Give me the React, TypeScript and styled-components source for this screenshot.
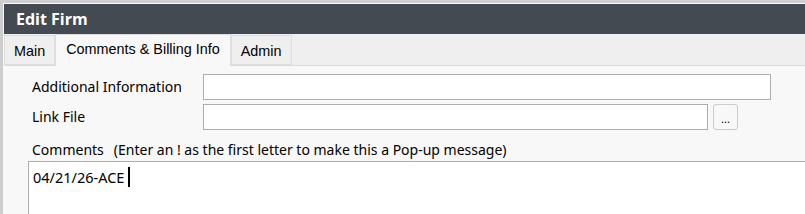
import React from "react";
import { styled, createGlobalStyle } from "styled-components";

const GlobalStyle = createGlobalStyle`
  html, body {
    margin: 0;
    padding: 0;
    background: #f8f8f8;
    overflow: hidden;
  }
  body {
    font-family: "Noto Sans", "Open Sans", sans-serif;
  }
`;

const App: React.FC = () => {
  const tabs = ["Main", "Comments & Billing Info", "Admin"];
  const activeTab = 1;

  return (
    <>
      <GlobalStyle />
      <Window>
        <TitleBar>Edit Firm</TitleBar>
        <TabStrip>
          {tabs.map((tab, i) => (
            <Tab key={tab} $active={i === activeTab}>
              {tab}
            </Tab>
          ))}
        </TabStrip>
        <Panel>
          <FieldRow>
            <Label>Additional Information</Label>
            <TextBox $width={568} />
          </FieldRow>
          <FieldRow>
            <Label>Link File</Label>
            <TextBox $width={505} />
            <BrowseButton>...</BrowseButton>
          </FieldRow>
          <CommentsLabel>
            Comments<Hint>(Enter an ! as the first letter to make this a Pop-up message)</Hint>
          </CommentsLabel>
          <CommentsBox>
            04/21/26-ACE<Caret />
          </CommentsBox>
        </Panel>
      </Window>
    </>
  );
};

const Window = styled.div`
  display: flex;
  flex-direction: column;
  width: 805px;
  height: 214px;
  box-sizing: border-box;
  border-top: 3px solid #cfcfcf;
  border-left: 3px solid #cdcdcd;
  padding-top: 1px;
  padding-left: 1px;
  background: #f8f8f8;
  overflow: hidden;
`;

const TitleBar = styled.div`
  height: 30px;
  flex-shrink: 0;
  background: #434a52;
  color: #ffffff;
  font-family: "Open Sans", "Noto Sans", sans-serif;
  font-weight: 700;
  font-size: 16px;
  line-height: 30px;
  padding-left: 12px;
`;

const TabStrip = styled.div`
  display: flex;
  align-items: flex-end;
  height: 32px;
  flex-shrink: 0;
  background: #efefef;
  border-bottom: 1px solid #dcdcdc;
  box-sizing: border-box;
`;

const Tab = styled.div<{ $active?: boolean }>`
  display: flex;
  align-items: center;
  box-sizing: border-box;
  height: ${(p) => (p.$active ? "32px" : "30px")};
  margin-bottom: ${(p) => (p.$active ? "-1px" : "0")};
  padding: ${(p) => (p.$active ? "0 10px 3px" : "2px 9px 0")};
  background: ${(p) => (p.$active ? "#f8f8f8" : "#efefef")};
  border: 1px solid #dedede;
  border-bottom: ${(p) => (p.$active ? "none" : "1px solid #dedede")};
  color: #000000;
  font-family: "Liberation Sans", Arial, sans-serif;
  font-size: 14.4px;
`;

const Panel = styled.div`
  flex: 1;
  display: flex;
  flex-direction: column;
  padding: 7px 0 0 24px;
  background: #f8f8f8;
`;

const FieldRow = styled.div`
  display: flex;
  align-items: center;
  height: 27px;
  margin-bottom: 3px;
`;

const Label = styled.div`
  width: 171px;
  padding-left: 4px;
  font-size: 14px;
  color: #000000;
`;

const TextBox = styled.div<{ $width: number }>`
  width: ${(p) => p.$width}px;
  height: 26px;
  box-sizing: border-box;
  background: #ffffff;
  border: 1px solid #adadad;
`;

const BrowseButton = styled.div`
  margin-left: 5px;
  width: 25px;
  height: 26px;
  box-sizing: border-box;
  border: 1px solid #cccccc;
  border-radius: 3px;
  background: #f8f8f8;
  display: flex;
  align-items: center;
  justify-content: center;
  font-size: 11px;
  color: #000000;
  padding-top: 4px;
`;

const CommentsLabel = styled.div`
  margin-top: 7px;
  padding-left: 4px;
  font-size: 14px;
  height: 20px;
  color: #000000;
`;

const Hint = styled.span`
  margin-left: 10px;
`;

const CommentsBox = styled.div`
  flex: 1;
  margin-top: 1px;
  display: flex;
  align-items: flex-start;
  padding: 4px 0 0 4px;
  background: #ffffff;
  border-top: 1px solid #adadad;
  border-left: 1px solid #adadad;
  font-size: 14.5px;
  line-height: 22px;
  color: #000000;
`;

const Caret = styled.span`
  display: inline-block;
  width: 2px;
  height: 20px;
  margin-left: 4px;
  margin-top: 1px;
  background: #000000;
`;

export default App;
